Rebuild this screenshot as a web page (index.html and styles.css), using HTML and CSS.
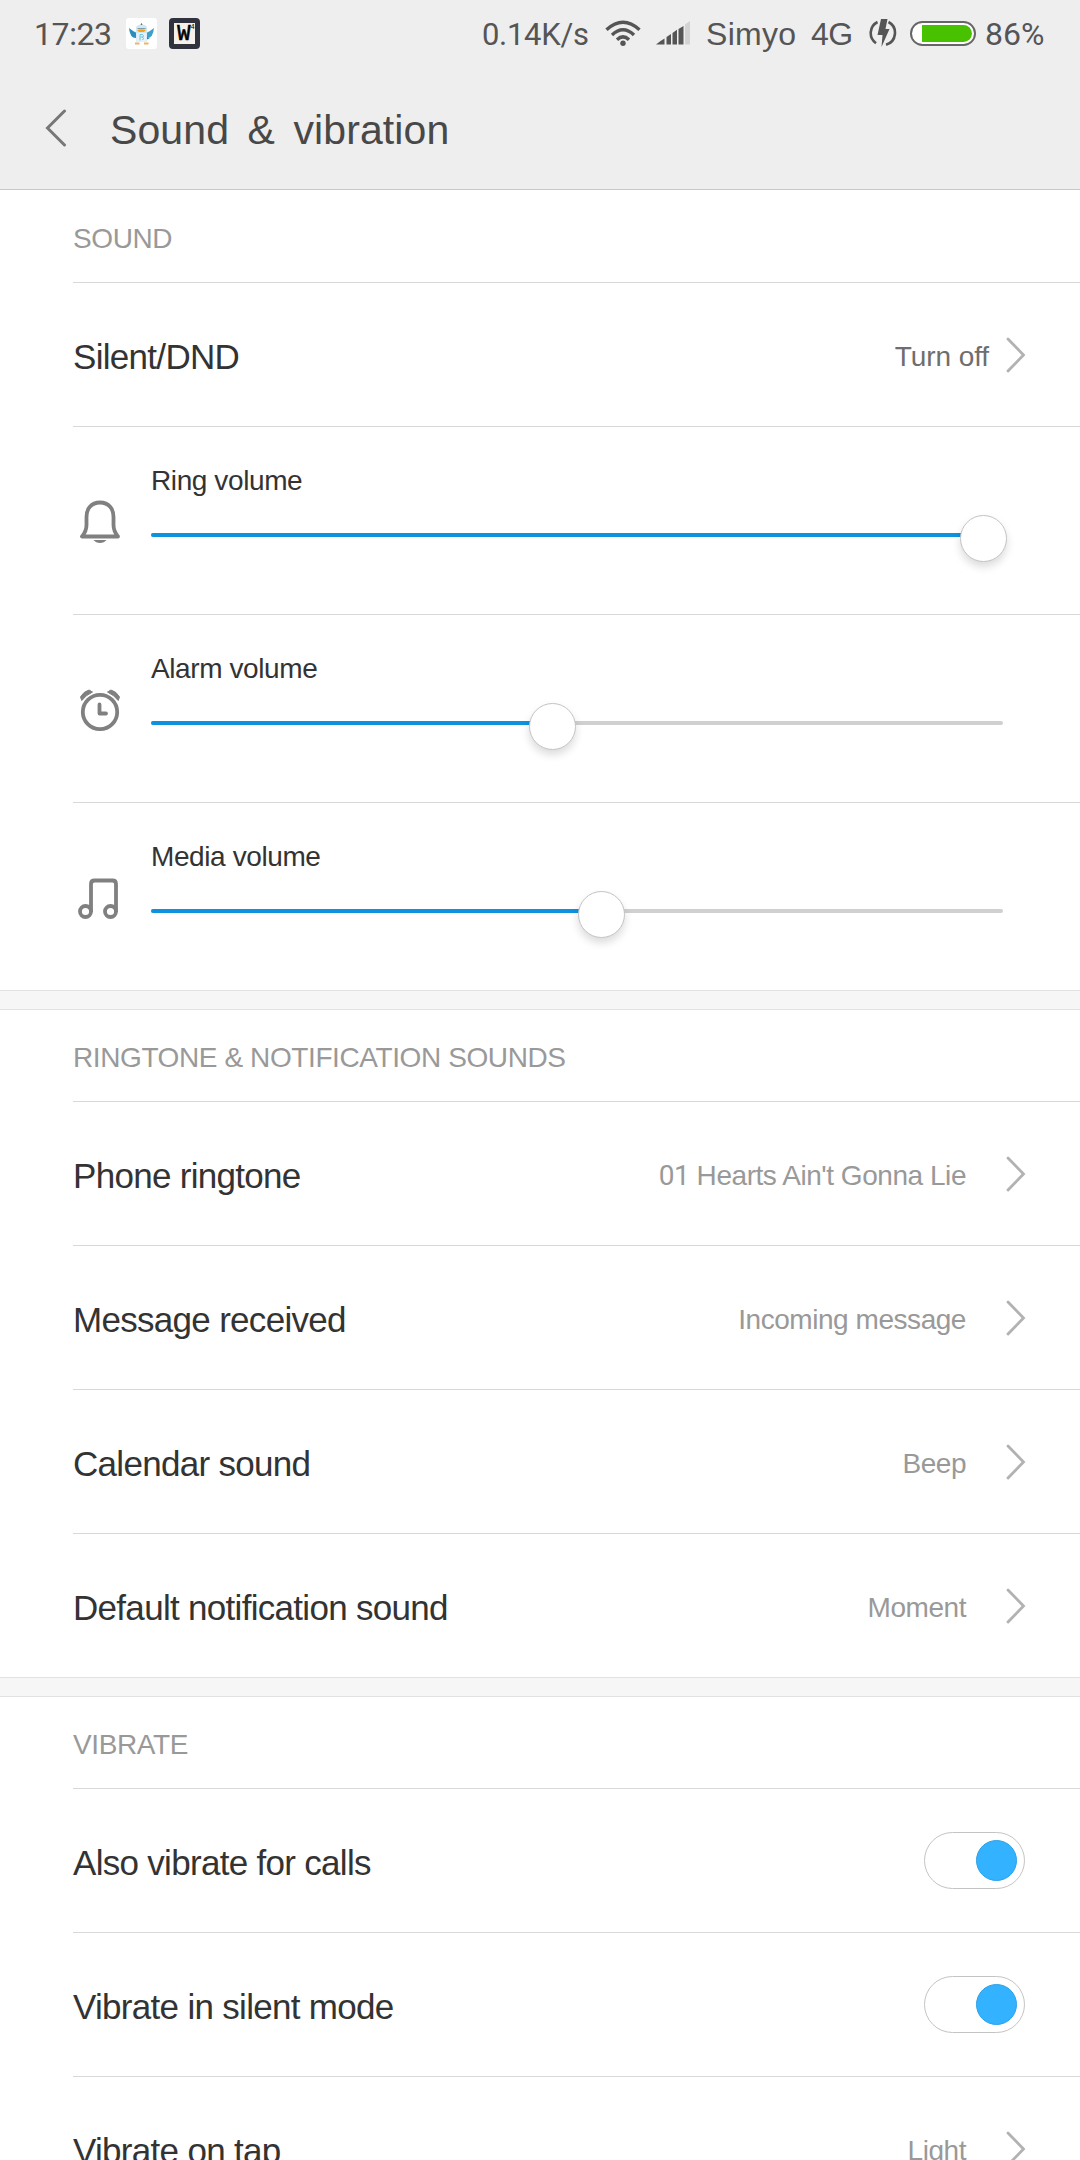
FILE: index.html
```html
<!DOCTYPE html>
<html lang="en">
<head>
  <meta charset="utf-8">
  <title>Sound &amp; vibration</title>
  <link rel="stylesheet" href="styles.css">
</head>
<body>
<svg width="0" height="0" class="defs">
  <symbol id="chevron" viewBox="0 0 20 36">
    <path d="M2 2 L17.500 18 L2 34" fill="none" stroke="#b2b2b2" stroke-width="2.800" stroke-linecap="round"/>
  </symbol>
</svg>

<header class="top">
  <div class="status">
    <span class="time">17:23</span>
    <svg class="app-bird" width="31" height="31" viewBox="0 0 31 31">
      <rect width="31" height="31" rx="3" fill="#fff"/>
      <path d="M3 10 Q8 14 11 15 L11 20 Q4 21 3 10Z" fill="#2b8dbb"/>
      <path d="M28 10 Q23 14 20 15 L20 20 Q27 21 28 10Z" fill="#3f9fc9"/>
      <path d="M20 19 L24 20 L20 22Z" fill="#2b7fa8"/>
      <path d="M10 24 V10 Q10 6.500 15.500 6.500 Q21 6.500 21 10 V24Z" fill="#cfe9f3"/>
      <path d="M14.500 7 L15.500 4.800 L16.500 7Z" fill="#58717c"/>
      <path d="M11 12 Q15.500 10.500 20 12 L18 14 H13Z" fill="#f6a21c"/>
      <path d="M11.500 10.500 H19.500" stroke="#6d8994" stroke-width=".8"/>
      <rect x="10.500" y="15" width="10" height="9" fill="#e3f3f9"/>
      <path d="M14 22.500 V16.500 H16.500 Q18 17 17 19 H14.500 M16.500 19 Q18.500 20.500 16.500 22" fill="none" stroke="#78bedc" stroke-width="1"/>
      <path d="M9 25.500 H13.500 M18 25.500 H22.500" stroke="#efb26c" stroke-width="1.800"/>
    </svg>
    <span class="app-word">W<sup>4</sup></span>

    <div class="status-right">
      <span class="speed">0.14K/s</span>
      <svg class="wifi" width="36" height="27" viewBox="0 0 36 27" fill="none" stroke="#555" stroke-width="3.400">
        <path d="M1.500 9.800 Q18 -5.200 34.500 9.800"/>
        <path d="M7 15 Q18 4.600 29 15"/>
        <path d="M12 19.800 Q18 14 24 19.800"/>
        <circle cx="18" cy="23.200" r="2.700" fill="#555" stroke="none"/>
      </svg>
      <svg class="signal" width="35" height="24" viewBox="0 0 35 24" fill="#555">
        <path d="M0 23.500 Q4 20 8.500 17.500 V23.500Z"/>
        <path d="M10.500 23.500 V16 L15 13 V23.500Z"/>
        <path d="M16.500 23.500 V12 L21 8.800 V23.500Z"/>
        <path d="M22.500 23.500 V8 L27.500 5 V23.500Z"/>
        <path d="M29 23.500 V3.500 L34 0 V23.500Z" fill="#d3d3d3"/>
      </svg>
      <span class="carrier">Simyo</span>
      <span class="network">4G</span>
      <svg class="bolt" width="28" height="30" viewBox="0 0 28 30">
        <path d="M8.500 4 A12.400 12.400 0 0 0 7 25.200 M19.500 4 A12.400 12.400 0 0 1 17 26.800" fill="none" stroke="#555" stroke-width="2.600"/>
        <path d="M12 1 H18.500 L16.500 11 H20.500 L12.500 29 L13.500 17 H8.500Z" fill="#555"/>
      </svg>
      <span class="battery"></span>
      <span class="percent">86%</span>
    </div>
  </div>
  <div class="title-bar">
    <svg class="back" width="22" height="38" viewBox="0 0 22 38">
      <path d="M19.500 2 L2.500 19 L19.500 36" fill="none" stroke="#777" stroke-width="3" stroke-linecap="round"/>
    </svg>
    <h1>Sound &amp; vibration</h1>
  </div>
</header>

<section class="group first">
  <h2>SOUND</h2>
  <div class="row">
    <span class="name">Silent/DND</span>
    <span class="value dark">Turn off</span>
    <svg class="chevron"><use href="#chevron"/></svg>
  </div>
  <div class="volume">
    <svg class="volume-icon" width="44" height="44" viewBox="0 0 44 44" fill="none" stroke="#808080" stroke-width="3.800">
      <path d="M22 2.500 C13 2.500 8.500 9 8.500 17 V25 Q8.500 31 4 36.500 H40 Q35.500 31 35.500 25 V17 C35.500 9 31 2.500 22 2.500Z" stroke-linejoin="round"/>
      <path d="M15.500 40 H28.500 Q26 43 22 43 Q18 43 15.500 40Z" fill="#808080" stroke="none"/>
    </svg>
    <div class="volume-body">
      <div class="volume-name">Ring volume</div>
      <div class="slider"><div class="fill" style="width: 832px"></div></div>
    </div>
  </div>
  <div class="volume">
    <svg class="volume-icon" width="44" height="44" viewBox="0 0 44 44" fill="none" stroke="#808080" stroke-width="3.800">
      <circle cx="22" cy="24" r="17.200"/>
      <path d="M21.500 16.500 V25.500 H28" stroke-linecap="round" stroke-linejoin="round"/>
      <path d="M3.800 12.500 L2.500 9 Q5.500 3.500 11 2 L14.500 4 Q8 7 3.800 12.500Z M40.200 12.500 L41.500 9 Q38.500 3.500 33 2 L29.500 4 Q36 7 40.200 12.500Z" fill="#808080" stroke-width="1" stroke-linejoin="round"/>
    </svg>
    <div class="volume-body">
      <div class="volume-name">Alarm volume</div>
      <div class="slider"><div class="fill" style="width: 401px"></div></div>
    </div>
  </div>
  <div class="volume">
    <svg class="volume-icon" width="44" height="44" viewBox="0 0 44 44" fill="none" stroke="#808080" stroke-width="3.800">
      <circle cx="7.500" cy="35.500" r="5.500"/>
      <circle cx="32.500" cy="35.500" r="5.500"/>
      <path d="M13 36 V8 Q13 4.500 16.500 4.500 H34.500 Q38 4.500 38 8 V36"/>
    </svg>
    <div class="volume-body">
      <div class="volume-name">Media volume</div>
      <div class="slider"><div class="fill" style="width: 450px"></div></div>
    </div>
  </div>
</section>

<section class="group">
  <h2>RINGTONE &amp; NOTIFICATION SOUNDS</h2>
  <div class="row">
    <span class="name">Phone ringtone</span>
    <span class="value"><span class="digits">01</span> Hearts Ain't Gonna Lie</span>
    <svg class="chevron"><use href="#chevron"/></svg>
  </div>
  <div class="row">
    <span class="name">Message received</span>
    <span class="value">Incoming message</span>
    <svg class="chevron"><use href="#chevron"/></svg>
  </div>
  <div class="row">
    <span class="name">Calendar sound</span>
    <span class="value">Beep</span>
    <svg class="chevron"><use href="#chevron"/></svg>
  </div>
  <div class="row">
    <span class="name">Default notification sound</span>
    <span class="value">Moment</span>
    <svg class="chevron"><use href="#chevron"/></svg>
  </div>
</section>

<section class="group">
  <h2>VIBRATE</h2>
  <div class="row">
    <span class="name">Also vibrate for calls</span>
    <span class="toggle"></span>
  </div>
  <div class="row">
    <span class="name">Vibrate in silent mode</span>
    <span class="toggle"></span>
  </div>
  <div class="row">
    <span class="name">Vibrate on tap</span>
    <span class="value">Light</span>
    <svg class="chevron"><use href="#chevron"/></svg>
  </div>
</section>
</body>
</html>
```

FILE: styles.css
```css
*,
*::before,
*::after {
    box-sizing: border-box;
}

body {
    margin: 0;
    height: 2160px;
    overflow: hidden;
    color: #333;
    background-color: #fff;
    font-family: "Liberation Sans", Arial, sans-serif;
}

.defs {
    position: absolute;
}

/* status bar + title */
.top {
    height: 190px;
    background-color: #eee;
    border-bottom: 1px solid #c8c8c8;
}

.status {
    display: flex;
    align-items: center;
    height: 66px;
    padding: 0 35px 0 34px;
    color: #555;
    font-size: 32px;
    white-space: nowrap;
}

.time {
    width: 92px;
    padding-top: 2px;
    font-family: Roboto, sans-serif;
    letter-spacing: -.4px;
}

.app-word {
    display: flex;
    justify-content: center;
    width: 31px;
    height: 31px;
    margin-left: 12px;
    border: 5px solid #30333e;
    border-radius: 4px;
    background-color: #f5f1ea;
    color: #000;
    font: 22px/23px "Liberation Mono", monospace;
    -webkit-text-stroke: .6px #000;
}

.app-word sup {
    margin-right: -3px;
    font-size: 7px;
    line-height: 8px;
    -webkit-text-stroke: 0;
}

.status-right {
    display: flex;
    align-items: center;
    margin-left: auto;
}

.speed, .carrier, .network, .percent {
    padding-top: 2px;
}

.speed {
    width: 123px;
    font-family: Roboto, sans-serif;
    font-size: 31px;
    letter-spacing: -.3px;
}

.wifi {
    margin-right: 15px;
}

.signal {
    margin-right: 15px;
}

.carrier {
    width: 105px;
    letter-spacing: .3px;
}

.network {
    width: 58px;
    letter-spacing: -.5px;
}

.bolt {
    margin-right: 13px;
}

.battery {
    width: 66px;
    height: 25px;
    margin-right: 9px;
    padding: 2px 2px 2px 10px;
    border: 2px solid #666;
    border-radius: 13px;
    background-color: #fff;
}

.battery::after {
    content: "";
    display: block;
    height: 100%;
    border-radius: 0 9px 9px 0;
    background-color: #48c200;
}

.percent {
    width: 60px;
    font-family: Roboto, sans-serif;
}

.title-bar {
    display: flex;
    align-items: center;
    height: 123px;
    padding: 0 45px;
}

.back {
    margin-right: 43px;
}

h1 {
    margin: 5px 0 0;
    color: #484848;
    font-size: 41px;
    font-weight: normal;
    letter-spacing: .1px;
    word-spacing: 7px;
}

/* settings groups */
.group {
    padding-left: 73px;
}

.group.first {
    padding-top: 1px;
}

.group + .group::before {
    content: "";
    display: block;
    height: 20px;
    margin-left: -73px;
    border: solid #e2e2e2;
    border-width: 1px 0;
    background-color: #f6f6f6;
}

h2 {
    height: 92px;
    margin: 0;
    padding-top: 4px;
    border-bottom: 1px solid #d8d8d8;
    color: #999;
    font-size: 28px;
    font-weight: normal;
    line-height: 88px;
    letter-spacing: -.4px;
}

.row {
    display: flex;
    align-items: center;
    height: 144px;
    padding-right: 54px;
    border-bottom: 1px solid #d8d8d8;
}

.row:last-child,
.volume:last-child {
    border-bottom: none;
}

.row:last-child {
    height: 143px;
}

.name {
    flex: 1;
    padding-top: 4px;
    font-size: 35px;
    letter-spacing: -.7px;
}

.value {
    padding: 4px 40px 0 0;
    color: #999;
    font-size: 28px;
    letter-spacing: -.45px;
}

.value.dark {
    padding-right: 17px;
    color: #6e6e6e;
    letter-spacing: -.1px;
}

.digits {
    font-family: Roboto, sans-serif;
}

.chevron {
    width: 20px;
    height: 36px;
}

.toggle {
    display: flex;
    justify-content: flex-end;
    align-items: center;
    width: 101px;
    height: 57px;
    margin-right: 1px;
    padding-right: 7px;
    border: 1px solid #c4c4c4;
    border-radius: 29px;
}

.toggle::after {
    content: "";
    width: 41px;
    height: 41px;
    border: 1px solid #2ba1ea;
    border-radius: 50%;
    background-color: #33b2ff;
}

/* volume rows */
.volume {
    display: flex;
    height: 188px;
    border-bottom: 1px solid #d8d8d8;
}

.volume:last-child {
    height: 187px;
}

.volume-icon {
    margin: 73px 0 0 5px;
}

.volume-body {
    width: 852px;
    margin-left: 29px;
}

.volume-name {
    height: 106px;
    padding-top: 38px;
    font-size: 28px;
    line-height: 32px;
    letter-spacing: -.4px;
}

.slider {
    height: 4px;
    border-radius: 2px;
    background-color: #d0d0d0;
}

.fill {
    position: relative;
    height: 4px;
    border-radius: 2px;
    background-color: #0e92dd;
}

/* thumb hangs over the end of the filled part */
.fill::after {
    content: "";
    position: absolute;
    top: -18px;
    right: -24px;
    width: 47px;
    height: 47px;
    border: 1px solid #c4c4c4;
    border-radius: 50%;
    background-color: #fff;
    box-shadow: 0 5px 8px rgba(0, 0, 0, .14);
}
```
